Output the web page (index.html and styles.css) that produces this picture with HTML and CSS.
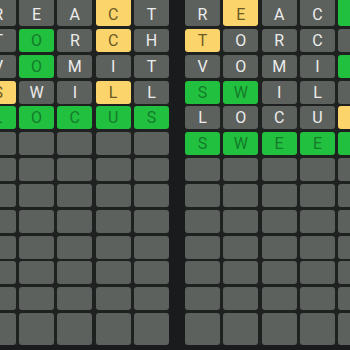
FILE: index.html
```html
<!DOCTYPE html>
<html>
<head>
    <title>Duordle</title>
    <meta name="viewport" content="width=device-width, initial-scale=1">
    <link rel="stylesheet" href="styles.css">
</head>
<body>
    <div class="boards">
        <div class="board" id="board-1"></div>
        <div class="board" id="board-2"></div>
    </div>

    <script>
        const guesses = ['REACT', 'TORCH', 'VOMIT', 'SWILL', 'LOCUS', 'SWEET'];

        // g = right place, y = in the word, b = not in the word
        const boards = [
            { id: 'board-1', marks: ['bbbyb', 'bgbyb', 'bgbbb', 'ybbyb', 'ggggg'] },
            { id: 'board-2', marks: ['bybbg', 'ybbbb', 'bbbbg', 'ggbbb', 'bbbby', 'ggggg'] }
        ];
        const ROWS = 13;
        const classes = { g: 'tile-green', y: 'tile-yellow', b: 'tile-gray' };

        boards.forEach(board => {
            const el = document.getElementById(board.id);
            for (let r = 0; r < ROWS; r++) {
                for (let c = 0; c < 5; c++) {
                    const tile = document.createElement('div');
                    tile.className = 'tile';
                    if (r < board.marks.length) {
                        tile.classList.add(classes[board.marks[r][c]]);
                        tile.textContent = guesses[r][c];
                    }
                    el.appendChild(tile);
                }
            }
        });
    </script>
</body>
</html>
```

FILE: styles.css
```css
body {
    margin: 0;
    height: 350px;
    overflow: hidden;
    background: #1a1b1d;
    font-family: Roboto, "Liberation Sans", sans-serif;
}
.boards {
    display: flex;
    gap: 16px;
    margin-left: -19.33px;
}
.board {
    flex-shrink: 0;
    display: grid;
    grid-template-columns: repeat(5, 35px);
    grid-template-rows: 26px repeat(11, 23px) 31.8px;
    gap: 2.85px 3.33px;
    background: #1f2120;
}
.tile {
    display: flex;
    align-items: center;
    justify-content: center;
    background: #5c615d;
    border-radius: 3px;
    color: #ececec;
    font-size: 16px;
}
.tile:nth-child(-n+5) {
    padding-top: 3px;
    border-top-left-radius: 0;
    border-top-right-radius: 0;
}
.tile-green {
    background: #21c13f;
    color: #157a2b;
}
.tile-yellow {
    background: #fbd56b;
    color: #6c5a24;
}
```
